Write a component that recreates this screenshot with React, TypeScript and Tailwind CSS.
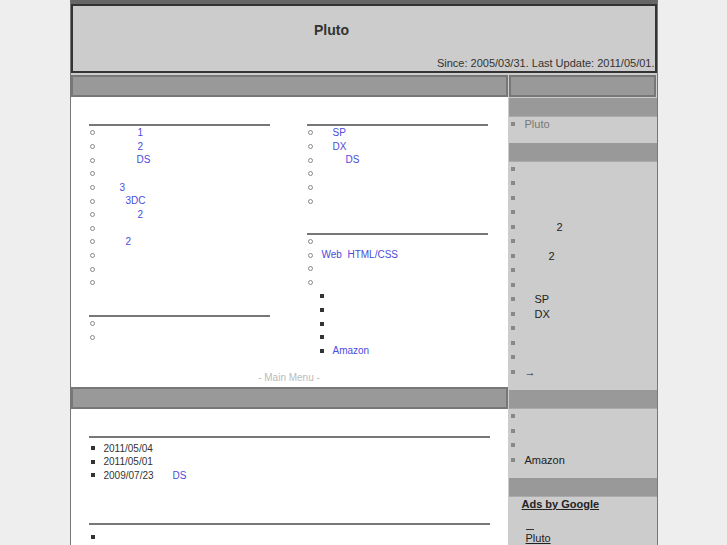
type Item = { text?: string; pad?: string; link?: boolean };

const leftTop: Item[] = [
  { text: "1", pad: "pl-[34px]", link: true },
  { text: "2", pad: "pl-[34px]", link: true },
  { text: "DS", pad: "pl-[33px]", link: true },
  {},
  { text: "3", pad: "pl-[16px]", link: true },
  { text: "3DC", pad: "pl-[22px]", link: true },
  { text: "2", pad: "pl-[34px]", link: true },
  {},
  { text: "2", pad: "pl-[22px]", link: true },
  {},
  {},
  {},
];

const rightTop: Item[] = [
  { text: "SP", pad: "pl-[11px]", link: true },
  { text: "DX", pad: "pl-[11px]", link: true },
  { text: "DS", pad: "pl-[24px]", link: true },
  {},
  {},
  {},
];

const sideMain: Item[] = [
  {}, {}, {}, {},
  { text: "2", pad: "pl-[32px]" },
  {},
  { text: "2", pad: "pl-[24px]" },
  {}, {},
  { text: "SP", pad: "pl-[10px]" },
  { text: "DX", pad: "pl-[10px]" },
  {}, {}, {},
  { text: "→" },
];

const font = "font-['Liberation_Sans','Noto_Sans_CJK_JP',sans-serif]";

function Circle() {
  return <span className="ml-[1px] mr-[9px] inline-block h-[5px] w-[5px] shrink-0 rounded-full border border-[#888]" />;
}

function Square({ tone = "bg-[#333]" }: { tone?: string }) {
  return <span className={`ml-[2px] mr-[9px] inline-block h-[4px] w-[4px] shrink-0 ${tone}`} />;
}

function Row({ item, bullet }: { item: Item; bullet: "circle" | "square" }) {
  return (
    <li className="flex h-[13.65px] items-center leading-[13.65px]">
      {bullet === "circle" ? <Circle /> : <Square />}
      {item.text && (
        <span className={`${item.pad ?? ""} ${item.link ? "text-[#4b4bdc]" : "text-[#333]"}`}>{item.text}</span>
      )}
    </li>
  );
}

function Block({ items, className = "" }: { items: Item[]; className?: string }) {
  return (
    <div className={className}>
      <div className="border-t-2 border-[#777]" />
      <ul>
        {items.map((it, i) => (
          <Row key={i} item={it} bullet="circle" />
        ))}
      </ul>
    </div>
  );
}

function NavBar({ className = "" }: { className?: string }) {
  return <div className={`h-[22px] border-2 border-[#777] bg-[#999] ${className}`} />;
}

function SideHead() {
  return <div className="h-[19px] bg-[#999] border-b border-[#aaa]" />;
}

function SideList({ items, muted = false }: { items: Item[]; muted?: boolean }) {
  return (
    <ul className="pb-[11px] text-[11px]">
      {items.map((it, i) => (
        <li key={i} className="flex h-[14.5px] items-center pl-[2px] leading-[14.5px]">
          <span className="mr-[10px] inline-block h-[4px] w-[4px] shrink-0 bg-[#888]" />
          {it.text && <span className={`${it.pad ?? ""} ${muted ? "text-[#777]" : "text-[#222]"}`}>{it.text}</span>}
        </li>
      ))}
    </ul>
  );
}

export default function App() {
  return (
    <div className={`min-h-[545px] bg-[#eeeeee] ${font}`}>
      <div className="mx-auto w-[588px] border-x border-t-4 border-x-[#777] border-t-[#666] bg-[#ccc]">
        {/* header */}
        <div className="flex h-[69px] flex-col border-2 border-[#333] bg-[#ccc]">
          <div className="pr-[64px] pt-[16px] text-center text-[14px] font-bold leading-[16px] text-[#333]">Pluto</div>
          <div className="flex-1" />
          <div className="pb-[1px] text-right text-[11px] leading-[13px] text-[#333]">
            Since: 2005/03/31. Last Update: 2011/05/01.
          </div>
        </div>

        <div className="mt-[2px] flex">
          {/* main column */}
          <div className="w-[437px] shrink-0 bg-white">
            <NavBar />
            <div className="flex gap-[37px] pl-[18px] pt-[27px] text-[10px]">
              <div className="w-[181px]">
                <Block items={leftTop} />
                <Block items={[{}, {}]} className="mt-[25px]" />
              </div>
              <div className="w-[181px]">
                <Block items={rightTop} />
                <div className="mt-[25px]">
                  <div className="border-t-2 border-[#777]" />
                  <ul>
                    <Row item={{}} bullet="circle" />
                    <li className="flex h-[13.65px] items-center leading-[13.65px]">
                      <Circle />
                      <span className="text-[#4b4bdc]">Web&nbsp;&nbsp;HTML/CSS</span>
                    </li>
                    <Row item={{}} bullet="circle" />
                    <Row item={{}} bullet="circle" />
                  </ul>
                  <ul className="pl-[11px]">
                    <Row item={{}} bullet="square" />
                    <Row item={{}} bullet="square" />
                    <Row item={{}} bullet="square" />
                    <Row item={{}} bullet="square" />
                    <Row item={{ text: "Amazon", link: true }} bullet="square" />
                  </ul>
                </div>
              </div>
            </div>
            <div className="mt-[13px] h-[14px] text-center text-[10px] leading-[14px] text-[#bbb]">- Main Menu -</div>
            <NavBar className="mt-[2px]" />
            <div className="px-[18px] pt-[27px] pb-[20px] text-[10px]">
              <div className="border-t-2 border-[#777]" />
              <ul className="mt-[4px]">
                <li className="flex h-[13.5px] items-center leading-[13.5px] text-[#333]">
                  <Square />
                  2011/05/04
                </li>
                <li className="flex h-[13.5px] items-center leading-[13.5px] text-[#333]">
                  <Square />
                  2011/05/01
                </li>
                <li className="flex h-[13.5px] items-center leading-[13.5px] text-[#333]">
                  <Square />
                  2009/07/23
                  <span className="pl-[19px] text-[#4b4bdc]">DS</span>
                </li>
              </ul>
              <div className="mt-[41px] border-t-2 border-[#777]" />
              <ul className="mt-[5px]">
                <li className="flex h-[13.5px] items-center leading-[13.5px]">
                  <Square />
                </li>
              </ul>
            </div>
          </div>

          {/* sidebar */}
          <div className="w-[149px] shrink-0 bg-[#ccc] pl-[1px]">
            <NavBar className="mr-[1px]" />
            <div className="h-[1px]" />
            <SideHead />
            <SideList items={[{ text: "Pluto" }]} muted />
            <SideHead />
            <SideList items={sideMain} />
            <SideHead />
            <SideList items={[{}, {}, {}, { text: "Amazon" }]} />
            <SideHead />
            <div className="pl-[13px] text-[11px] text-[#222]">
              <div className="font-bold leading-[14px] underline">Ads by Google</div>
              <div className="mt-[9px] pl-[4px] leading-[12px]">
                <span className="inline-block h-[9px] w-[8px] border-b border-[#333]" />
              </div>
              <div className="pl-[4px] leading-[13px] underline">Pluto</div>
            </div>
          </div>
        </div>
      </div>
    </div>
  );
}
